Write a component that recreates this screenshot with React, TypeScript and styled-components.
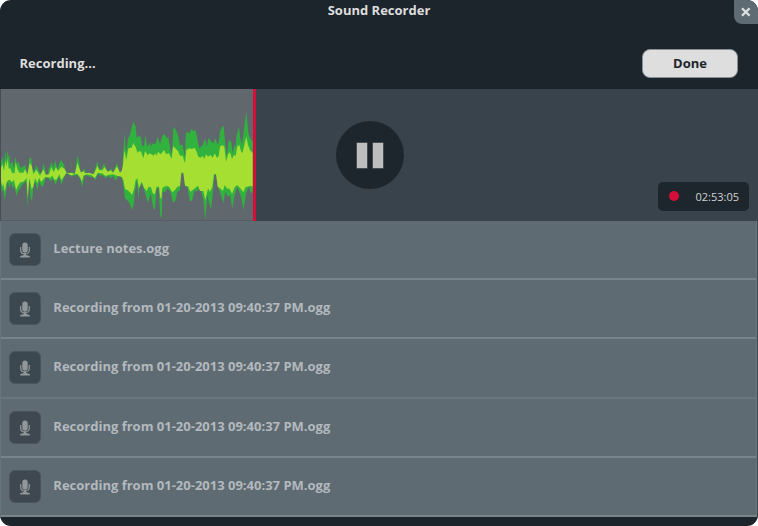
import React from "react";
import styled, { createGlobalStyle } from "styled-components";

const GlobalStyle = createGlobalStyle`
  * { box-sizing: border-box; }
  body { margin: 0; background: #fff; }
`;

const Window = styled.main`
  width: 758px;
  height: 526px;
  display: flex;
  flex-direction: column;
  overflow: hidden;
  border-radius: 11px;
  background: #1d252c;
  color: #dedede;
  font-family: "Open Sans", "Noto Sans", sans-serif;
  font-size: 13px;
  font-weight: 700;
`;

const TitleBar = styled.header`
  height: 38px;
  display: grid;
  grid-template-columns: 24px 1fr 24px;
  align-items: start;
`;

const Title = styled.h1`
  grid-column: 2;
  margin: 0;
  font-size: 13px;
  line-height: 21px;
  text-align: center;
`;

const CloseButton = styled.button`
  width: 24px;
  height: 24px;
  padding: 0;
  border: 0;
  border-radius: 0 11px 0 8px;
  background: #5e6b73;
  display: grid;
  place-items: center;
`;

const StatusBar = styled.div`
  height: 51px;
  padding: 0 20px 2px 19.5px;
  display: flex;
  align-items: center;
  justify-content: space-between;
`;

const DoneButton = styled.button`
  width: 96px;
  height: 29px;
  margin-top: 1px;
  padding: 0 0 1px;
  border: 1px solid #8a9196;
  border-radius: 8px;
  background: #dedede;
  color: #1d252c;
  font: inherit;
`;

const Recorder = styled.section`
  height: 132px;
  display: grid;
  grid-template-columns: 256px 1fr 100px;
  background: #39434b;
`;

const Track = styled.div`
  display: grid;
  grid-template-columns: 1fr 3px;
  border-left: 1px solid #464f57;
  background: #60676d;
`;

const Wave = styled.svg`
  display: block;
  width: 252px;
  height: 132px;
  border-bottom: 1px solid #525d66;
`;

const Playhead = styled.span`
  background: #d20f38;
`;

const Controls = styled.div`
  padding: 32px 0 0 80px;
`;

const PauseButton = styled.button`
  width: 68px;
  height: 68px;
  padding: 0;
  border: 0;
  border-radius: 50%;
  background: #1e262d;
  display: flex;
  align-items: center;
  justify-content: center;
  gap: 6px;
`;

const PauseBar = styled.span`
  width: 10px;
  height: 25px;
  background: #bebebe;
  box-shadow: 0 0 0 0.5px #6d7377;
`;

const Timer = styled.div`
  align-self: end;
  width: 91px;
  height: 29px;
  margin-bottom: 10px;
  padding: 0 10px 1px 10.5px;
  display: flex;
  align-items: center;
  justify-content: space-between;
  border-radius: 5px;
  background: #1e262d;
  color: #d0d2d3;
  font-size: 11px;
  font-weight: 400;
`;

const RecordDot = styled.i`
  width: 10px;
  height: 10px;
  border-radius: 50%;
  background: #d20f38;
`;

const FileList = styled.ul`
  margin: 0;
  padding: 0;
  list-style: none;
  display: grid;
  grid-template-rows: 59px 59px 60px 59px 59px;
  background: #5e6b73;
  border-left: 1px solid #67747b;
  border-right: 1px solid #3d4951;
`;

const FileRow = styled.li<{ $subtle?: boolean }>`
  display: flex;
  align-items: flex-start;
  gap: 12.3px;
  padding: 12px 0 0 8px;
  border-bottom: 2px solid ${(p) => (p.$subtle ? "#6b757c" : "#78838a")};
  border-right: 1px solid #6b777e;
  color: #b3b9be;
`;

const FileIcon = styled.span<{ $tone: string }>`
  width: 32px;
  height: 33px;
  border: 1px solid #4a565e;
  border-radius: 6px;
  background: ${(p) => p.$tone};
  display: grid;
  place-items: center;
`;

const FileName = styled.span`
  line-height: 18px;
  padding-top: 6px;
`;

const peaks =
  "3,232 8,215 12,240 16,195 19,230 22,195 25,215 28,210 31,240 37,228 42,250 46,215 50,235 55,232 62,250 75,240 80,262 84,262 89,215 94,222 98,255 103,258 110,240 118,262 125,265 131,233 138,268 145,268 146,250 150,245 155,230 160,250 166,225 172,255 178,235 184,225 192,240 197,258 205,265 215,262 225,265 228,240 233,210 238,235 241,258 247,265 253,250 258,265 280,268 286,250 292,228 297,252 305,252 312,234 320,255 328,262 332,250 340,262 351,233 358,258 366,262 370,200 374,143 378,208 384,160 390,150 395,130 400,110 407,125 410,160 415,153 422,155 426,180 432,185 436,150 442,185 450,172 452,185 458,175 466,178 473,155 480,178 488,150 494,148 500,160 505,155 510,185 514,210 517,190 520,125 528,135 535,155 540,180 548,180 554,215 558,145 564,140 567,148 574,132 580,138 586,135 590,150 598,190 608,180 616,160 620,185 626,158 632,168 640,175 646,160 652,178 656,175 660,140 666,126 671,122 674,160 680,215 686,165 694,172 698,205 703,178 706,190 710,150 717,125 720,155 726,180 731,140 735,110 739,80 742,110 745,145 750,160 758,170";
const troughs =
  "758,320 752,325 746,305 738,325 731,375 723,335 712,305 704,330 697,370 690,330 684,335 676,320 670,355 663,330 655,310 649,270 643,270 638,330 633,375 627,350 622,330 616,405 611,350 604,320 598,310 590,320 584,315 577,345 570,350 562,305 556,305 550,265 544,265 540,315 532,320 527,345 519,354 511,320 503,310 496,320 488,320 485,395 481,395 476,310 470,310 465,375 460,370 452,325 444,355 434,320 425,295 418,310 415,345 411,285 405,320 401,360 396,374 389,355 381,345 375,340 371,310 366,278 355,272 347,288 340,272 333,280 326,272 317,280 307,270 300,272 294,265 287,285 280,275 270,276 262,272 254,270 250,290 246,307 241,282 232,270 224,270 215,275 207,268 200,265 193,275 184,299 178,275 170,290 166,300 160,282 151,288 145,280 137,278 131,300 125,305 117,288 113,318 106,290 101,300 96,347 92,340 88,280 83,366 79,290 74,292 68,298 60,310 54,320 49,333 43,300 38,312 33,290 28,310 23,285 19,315 14,348 10,310 6,325 3,300";
const bodyTop =
  "3,248 8,238 12,258 17,225 20,245 23,220 26,252 30,248 36,264 44,265 47,232 52,252 58,263 70,263 76,252 82,270 89,234 95,242 100,268 109,254 120,272 130,253 137,270 147,268 154,247 161,262 168,246 174,258 184,245 193,251 200,265 216,264 224,268 228,253 232,233 238,250 243,263 250,258 255,265 267,263 280,268 285,260 292,242 298,256 308,256 313,246 323,260 332,256 339,263 351,244 360,263 365,258 369,240 373,195 379,225 385,190 395,188 400,175 408,188 412,203 417,198 423,200 430,220 435,198 443,210 450,205 460,212 466,205 470,212 474,200 482,208 492,195 498,207 507,205 515,222 519,184 526,190 534,198 540,212 548,212 555,235 559,195 568,190 576,192 584,188 590,200 595,215 602,218 608,212 613,222 618,208 624,215 632,210 638,218 644,205 651,218 656,213 660,185 667,180 673,185 678,230 684,208 690,202 696,222 702,210 707,212 712,184 718,180 723,198 727,205 733,180 739,155 744,180 750,195 758,204";
const bodyBottom =
  "758,305 750,302 744,305 737,305 730,322 721,310 711,300 704,307 696,327 689,312 680,310 674,300 669,318 660,310 653,305 648,267 642,267 637,305 630,320 624,310 616,345 610,318 600,318 594,302 585,310 578,315 571,320 564,304 555,302 550,263 544,263 540,303 532,305 525,315 517,322 507,305 500,303 492,305 487,310 484,342 481,340 477,305 470,305 464,328 458,325 453,307 446,305 440,318 432,308 425,290 417,310 412,280 407,285 402,312 396,330 390,322 382,315 375,312 370,285 365,275 350,272 340,268 325,270 317,273 306,265 294,263 284,280 274,270 260,268 250,272 246,290 240,277 232,266 224,268 214,271 207,268 199,264 193,272 184,286 178,268 170,283 164,285 157,272 150,278 137,275 128,285 124,292 117,278 112,295 105,279 100,305 95,312 88,280 83,340 80,280 70,290 61,292 54,302 48,315 42,285 36,292 30,285 25,285 19,295 14,320 10,295 7,305 3,290";

const files = [
  { name: "Lecture notes.ogg", tone: "#3c484f" },
  { name: "Recording from 01-20-2013 09:40:37 PM.ogg", tone: "#3c484f" },
  { name: "Recording from 01-20-2013 09:40:37 PM.ogg", tone: "#3c484f", subtle: true },
  { name: "Recording from 01-20-2013 09:40:37 PM.ogg", tone: "#3f4850" },
  { name: "Recording from 01-20-2013 09:40:37 PM.ogg", tone: "#3f4850" },
];

const Microphone = () => (
  <svg width="12" height="16" viewBox="0 0 12 16">
    <rect x="3.3" y="0.4" width="5.4" height="10.4" rx="2.7" fill="#929799" />
    <path d="M1.7 5v3.2c0 2.3 1.8 3.7 4.3 3.7s4.3-1.4 4.3-3.7V5" fill="none" stroke="#929799" strokeWidth="1.2" />
    <path d="M4.8 11.5h2.4v1.6q1 .7 3.6.8v1.7H1.2v-1.7q2.6-.1 3.6-.8z" fill="#929799" />
  </svg>
);

export default function App() {
  return (
    <>
      <GlobalStyle />
      <Window>
        <TitleBar>
          <Title>Sound Recorder</Title>
          <CloseButton aria-label="Close">
            <svg width="10" height="10" viewBox="0 0 10 10">
              <path d="M1 1.2l7.6 7.6M8.6 1.2L1 8.8" stroke="#dedede" strokeWidth="2.3" />
            </svg>
          </CloseButton>
        </TitleBar>
        <StatusBar>
          <span>Recording...</span>
          <DoneButton>Done</DoneButton>
        </StatusBar>
        <Recorder>
          <Track>
            <Wave viewBox="3 12 756 393" preserveAspectRatio="none">
              <polygon points={`${peaks} ${troughs}`} fill="#31b23e" />
              <polygon points={`${bodyTop} ${bodyBottom}`} fill="#a5df31" />
              <path d="M209 232l7 3-2 10-5-3" fill="none" stroke="#4f9b48" strokeWidth="2" strokeDasharray="4 3" />
            </Wave>
            <Playhead />
          </Track>
          <Controls>
            <PauseButton aria-label="Pause">
              <PauseBar />
              <PauseBar />
            </PauseButton>
          </Controls>
          <Timer>
            <RecordDot />
            <span>02:53:05</span>
          </Timer>
        </Recorder>
        <FileList>
          {files.map((file, i) => (
            <FileRow key={i} $subtle={file.subtle}>
              <FileIcon $tone={file.tone}>
                <Microphone />
              </FileIcon>
              <FileName>{file.name}</FileName>
            </FileRow>
          ))}
        </FileList>
      </Window>
    </>
  );
}
